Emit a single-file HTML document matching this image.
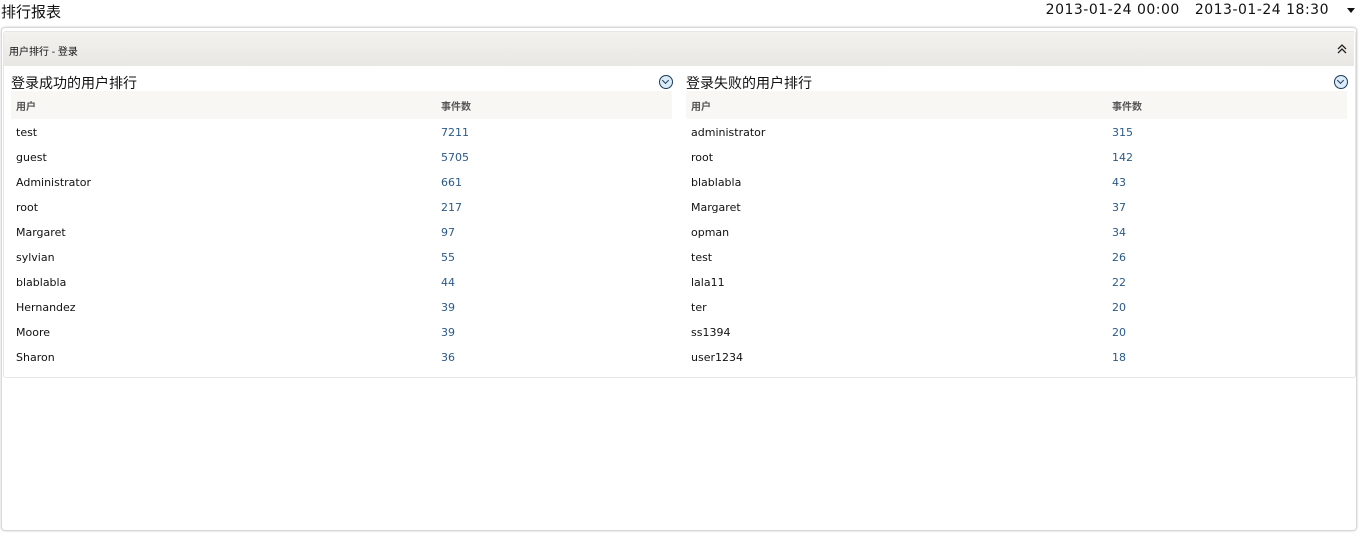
<!DOCTYPE html>
<html><head><meta charset="utf-8"><style>
body{margin:0;width:1362px;height:543px;background:#fff;font-family:"DejaVu Sans","Liberation Sans","Noto Sans CJK SC",sans-serif;position:relative;overflow:hidden;color:#111}
.title{position:absolute;left:1px;top:1px;font-size:15px;font-family:"Liberation Sans","Noto Sans CJK SC",sans-serif}
.date{position:absolute;right:33px;top:2px;font-size:14px;letter-spacing:0.5px}
.date span{margin-left:15px}
.caret{position:absolute;right:7px;top:8px;width:0;height:0;border-left:4px solid transparent;border-right:4px solid transparent;border-top:5px solid #111}
.outer{position:absolute;left:1px;top:27px;width:1354px;height:502px;border:1px solid #d8d8d8;border-radius:4px;box-shadow:0 0 2px #ccc}
.panel{position:absolute;left:3px;top:31px;width:1351px;height:345px;border:1px solid #e6e6e6;border-radius:3px}
.ph{position:absolute;left:4px;top:32px;width:1350px;height:34px;background:linear-gradient(#f3f2ef,#e9e7e3);font-size:10px;font-family:"Liberation Sans","Noto Sans CJK SC",sans-serif}
.ph span{position:absolute;left:5px;top:11px}
.up{position:absolute;right:7px;top:12px}
.t{position:absolute;top:73px;width:661px}
.t h3{margin:0;font-weight:normal;font-size:14px;font-family:"Liberation Sans","Noto Sans CJK SC",sans-serif;height:18px}
.clock{position:absolute;right:-1px;top:2px;width:12px;height:12px;border:1.5px solid #1d3a5a;border-radius:50%;background:#d9ecf8}
.clock:after{content:"";position:absolute;left:3px;top:2px;width:4px;height:4px;border-left:1.5px solid #1d3a5a;border-bottom:1.5px solid #1d3a5a;transform:rotate(-45deg)}
table{border-collapse:collapse;width:661px;font-size:11px;table-layout:fixed}
th{background:#f8f7f4;height:28px;text-align:left;font-weight:bold;color:#555;font-size:10px;padding:0 0 0 5px}
td{height:25px;padding:1px 0 0 5px;box-sizing:border-box}
td.n{color:#2a5a8a}
</style></head><body>
<div class="title">排行报表</div>
<div class="date">2013-01-24 00:00<span>2013-01-24 18:30</span></div>
<div class="caret"></div>
<div class="outer"></div>
<div class="panel"></div>
<div class="ph"><span>用户排行 - 登录</span><svg class="up" width="10" height="10" viewBox="0 0 10 10"><path d="M1 5 L5 1 L9 5 M1 9 L5 5 L9 9" fill="none" stroke="#222" stroke-width="1.3"/></svg></div>
<div class="t" style="left:11px"><h3>登录成功的用户排行</h3><div class="clock"></div>
<table><colgroup><col style="width:425px"><col></colgroup><tr><th>用户</th><th>事件数</th></tr>
<tr><td>test</td><td class="n">7211</td></tr>
<tr><td>guest</td><td class="n">5705</td></tr>
<tr><td>Administrator</td><td class="n">661</td></tr>
<tr><td>root</td><td class="n">217</td></tr>
<tr><td>Margaret</td><td class="n">97</td></tr>
<tr><td>sylvian</td><td class="n">55</td></tr>
<tr><td>blablabla</td><td class="n">44</td></tr>
<tr><td>Hernandez</td><td class="n">39</td></tr>
<tr><td>Moore</td><td class="n">39</td></tr>
<tr><td>Sharon</td><td class="n">36</td></tr>
</table></div>
<div class="t" style="left:686px"><h3>登录失败的用户排行</h3><div class="clock"></div>
<table><colgroup><col style="width:421px"><col></colgroup><tr><th>用户</th><th>事件数</th></tr>
<tr><td>administrator</td><td class="n">315</td></tr>
<tr><td>root</td><td class="n">142</td></tr>
<tr><td>blablabla</td><td class="n">43</td></tr>
<tr><td>Margaret</td><td class="n">37</td></tr>
<tr><td>opman</td><td class="n">34</td></tr>
<tr><td>test</td><td class="n">26</td></tr>
<tr><td>lala11</td><td class="n">22</td></tr>
<tr><td>ter</td><td class="n">20</td></tr>
<tr><td>ss1394</td><td class="n">20</td></tr>
<tr><td>user1234</td><td class="n">18</td></tr>
</table></div>
</body></html>
